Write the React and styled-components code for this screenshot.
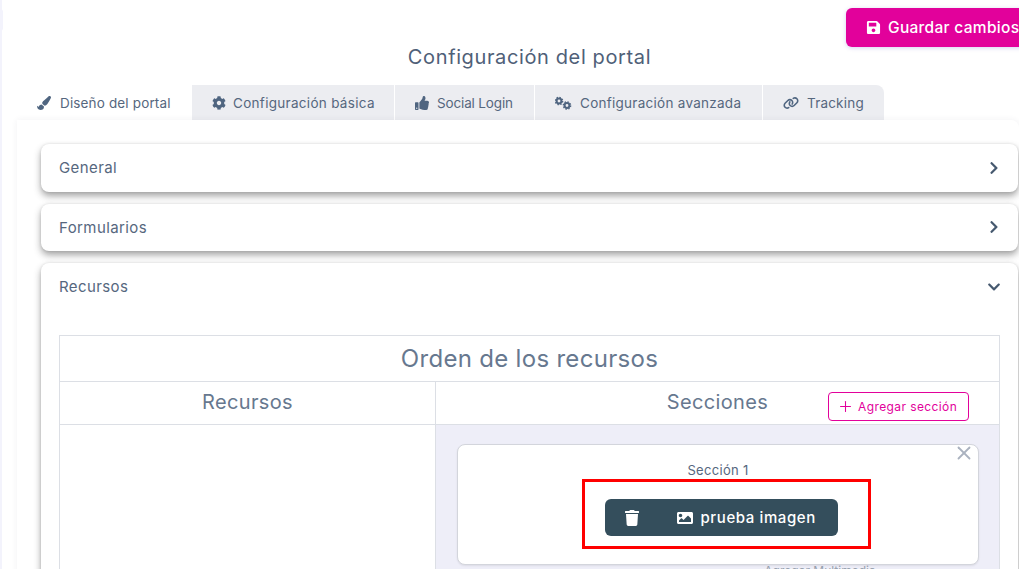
import React from "react";
import styled, { createGlobalStyle } from "styled-components";
import { FaPaintBrush, FaCog, FaThumbsUp, FaSave, FaTrash, FaImage, FaChevronRight, FaChevronDown } from "react-icons/fa";
import { FaLink } from "react-icons/fa6";
import { X, Plus } from "lucide-react";

const Global = createGlobalStyle`
  html, body { margin: 0; padding: 0; background: #fff; overflow: hidden; }
  body { font-family: Inter, "Noto Sans", sans-serif; color: #4f6078; }
  * { box-sizing: border-box; }
`;

const Page = styled.div`
  width: 1019px;
  height: 569px;
  overflow: hidden;
  display: flex;
  position: relative;
`;
const Rail = styled.div`
  position: relative;
  width: 2px;
  flex: none;
  background: #f3f3fc;
  &::after {
    content: "";
    position: absolute;
    left: 0;
    top: 9px;
    width: 3px;
    height: 22px;
    border-radius: 0 3px 3px 0;
    background: #f3f3fc;
  }
`;
const Main = styled.div`
  flex: 1;
  min-width: 0;
  padding: 8px 0 0 15px;
  display: flex;
  flex-direction: column;
`;
const TopBar = styled.div`
  flex: none;
  display: flex;
  justify-content: flex-end;
  margin-right: -30px;
  height: 39px;
`;
const SaveButton = styled.button`
  width: 203px;
  height: 39px;
  border: 0;
  border-radius: 6px;
  background: #e2019b;
  color: #fff;
  display: flex;
  align-items: center;
  gap: 7px;
  padding: 0 0 0 20px;
  font: 500 15.5px Inter, sans-serif;
  letter-spacing: 0.3px;
  box-shadow: 0 1px 4px rgba(90, 70, 200, 0.25);
`;
const Title = styled.h1`
  flex: none;
  margin: 0;
  height: 38px;
  padding-left: 23px;
  font: 400 20px/21px Inter, sans-serif;
  letter-spacing: 0.62px;
  text-align: center;
  color: #4f6078;
`;
const TabBar = styled.div`
  flex: none;
  display: flex;
  gap: 1px;
  height: 35px;
`;
const Tab = styled.div`
  width: ${(p) => p.$w}px;
  background: ${(p) => (p.$active ? "#fff" : "#ecedf1")};
  border-radius: ${(p) => p.$radius || "0"};
  display: flex;
  align-items: center;
  padding-left: 20px;
  gap: ${(p) => p.$gap}px;
  font-size: 13.5px;
  letter-spacing: ${(p) => p.$ls}px;
  color: #56677e;
  white-space: nowrap;
  svg { flex: none; width: ${(p) => p.$icon || 14}px; height: 14px; color: #4f6580; }
`;
const Panel = styled.div`
  flex: none;
  height: 500px;
  background: #fff;
  border-radius: 0 8px 0 0;
  box-shadow: 0 0 6px rgba(60, 60, 90, 0.07);
  padding: 24px 1px 0 24px;
  display: flex;
  flex-direction: column;
  gap: 12px;
`;
const Card = styled.section`
  background: #fff;
  border-radius: 8px;
  box-shadow: 0 4px 7px rgba(40, 40, 40, 0.42), 0 0 3px rgba(0, 0, 0, 0.1);
  flex: none;
`;
const CardHead = styled.div`
  height: ${(p) => p.$h}px;
  padding: 0 17px 1px 18px;
  display: flex;
  align-items: center;
  justify-content: space-between;
  font-size: 15px;
  letter-spacing: 0.4px;
  color: #56677e;
  svg { width: 14px; height: 14px; color: #46596f; }
`;
const Grid = styled.div`
  margin: 24px 18px 0 18px;
  border: 1px solid #dcdfe5;
  border-bottom: 0;
  display: grid;
  grid-template-columns: 375px 1fr;
  grid-template-rows: 46px 43px 1fr;
`;
const GridTitle = styled.div`
  grid-column: 1 / 3;
  display: flex;
  align-items: center;
  justify-content: center;
  font-size: 24px;
  letter-spacing: 0.3px;
  color: #67788f;
  border-bottom: 1px solid #dcdfe5;
`;
const ColHead = styled.div`
  position: relative;
  display: flex;
  align-items: center;
  justify-content: center;
  padding-bottom: 2px;
  font-size: 20px;
  letter-spacing: 0.35px;
  color: #67788f;
  border-bottom: 1px solid #dcdfe5;
  border-left: ${(p) => (p.$sep ? "1px solid #dcdfe5" : "0")};
`;
const AddButton = styled.button`
  position: absolute;
  right: 30px;
  top: 10px;
  width: 141px;
  height: 29px;
  border: 1px solid #e2019b;
  border-radius: 4px;
  background: #fff;
  color: #e2019b;
  display: flex;
  align-items: center;
  padding: 0 0 0 8px;
  gap: 4px;
  font: 400 12px Inter, sans-serif;
  letter-spacing: 0.4px;
`;
const LeftCell = styled.div`
  height: 160px;
`;
const RightCell = styled.div`
  background: #eeeef8;
  border-left: 1px solid #dcdfe5;
  padding: 19px 20px 0 21px;
`;
const SectionCard = styled.div`
  position: relative;
  width: 522px;
  height: 121px;
  background: #fff;
  border: 1px solid #d3d5dc;
  border-radius: 8px;
  box-shadow: 0 1px 2px rgba(0, 0, 0, 0.08);
  display: flex;
  flex-direction: column;
  align-items: center;
  padding-top: 17px;
`;
const SectionName = styled.div`
  font-size: 13px;
  letter-spacing: 0.3px;
  line-height: 16px;
  color: #56677e;
`;
const CloseIcon = styled(X)`
  position: absolute;
  top: -3px;
  right: 3px;
  color: #aab2bf;
`;
const Highlight = styled.div`
  margin: 1px 0 0 16px;
  width: 289px;
  height: 70px;
  border: 3px solid #f00;
  padding: 17px 0 0 20px;
`;
const Item = styled.div`
  width: 233px;
  height: 37px;
  border-radius: 6px;
  background: #344e5c;
  color: #fff;
  display: flex;
  align-items: center;
  padding-left: 19px;
  font-size: 15px;
  font-weight: 500;
  letter-spacing: 0.6px;
  svg { flex: none; }
`;
const ItemLabel = styled.span`
  display: flex;
  align-items: center;
  gap: 8px;
  margin-left: 37px;
`;
const DropHint = styled.div`
  padding-left: 204px;
  text-align: center;
  font-size: 12px;
  line-height: 12px;
  color: #9aa3b0;
`;

const Gears = () => (
  <svg viewBox="0 0 17 14" fill="none" stroke="currentColor" aria-hidden="true">
    <circle cx="4" cy="5" r="2.4" strokeWidth="2" />
    <circle cx="4" cy="5" r="3.7" strokeWidth="1.3" strokeDasharray="1.45 1.45" />
    <circle cx="12" cy="9.5" r="2.4" strokeWidth="2" />
    <circle cx="12" cy="9.5" r="3.7" strokeWidth="1.3" strokeDasharray="1.45 1.45" />
  </svg>
);

export default function App() {
  return (
    <>
      <Global />
      <Page>
        <Rail />
        <Main>
          <TopBar>
            <SaveButton><FaSave size={15} />Guardar cambios</SaveButton>
          </TopBar>
          <Title>Configuración del portal</Title>
          <TabBar>
            <Tab $active $w={174} $gap={9} $ls={0.15} $radius="8px 0 0 0"><FaPaintBrush />Diseño del portal</Tab>
            <Tab $w={202} $gap={7} $ls={0.3}><FaCog />Configuración básica</Tab>
            <Tab $w={139} $gap={8} $ls={-0.15}><FaThumbsUp />Social Login</Tab>
            <Tab $w={227} $gap={8} $ls={0.27} $icon={17}><Gears />Configuración avanzada</Tab>
            <Tab $w={121} $gap={8} $ls={0.2} $radius="0 8px 0 0" $icon={16}><FaLink />Tracking</Tab>
          </TabBar>
          <Panel>
            <Card><CardHead $h={48}>General<FaChevronRight /></CardHead></Card>
            <Card><CardHead $h={47}>Formularios<FaChevronRight /></CardHead></Card>
            <Card>
              <CardHead $h={48}>Recursos<FaChevronDown /></CardHead>
              <Grid>
                <GridTitle>Orden de los recursos</GridTitle>
                <ColHead>Recursos</ColHead>
                <ColHead $sep>Secciones<AddButton><Plus size={17} strokeWidth={1.5} />Agregar sección</AddButton></ColHead>
                <LeftCell />
                <RightCell>
                  <SectionCard>
                    <CloseIcon size={22} strokeWidth={2} />
                    <SectionName>Sección 1</SectionName>
                    <Highlight>
                      <Item>
                        <FaTrash size={16} />
                        <ItemLabel><FaImage size={16} />prueba imagen</ItemLabel>
                      </Item>
                    </Highlight>
                  </SectionCard>
                  <DropHint>Agregar Multimedia</DropHint>
                </RightCell>
              </Grid>
            </Card>
          </Panel>
        </Main>
      </Page>
    </>
  );
}
